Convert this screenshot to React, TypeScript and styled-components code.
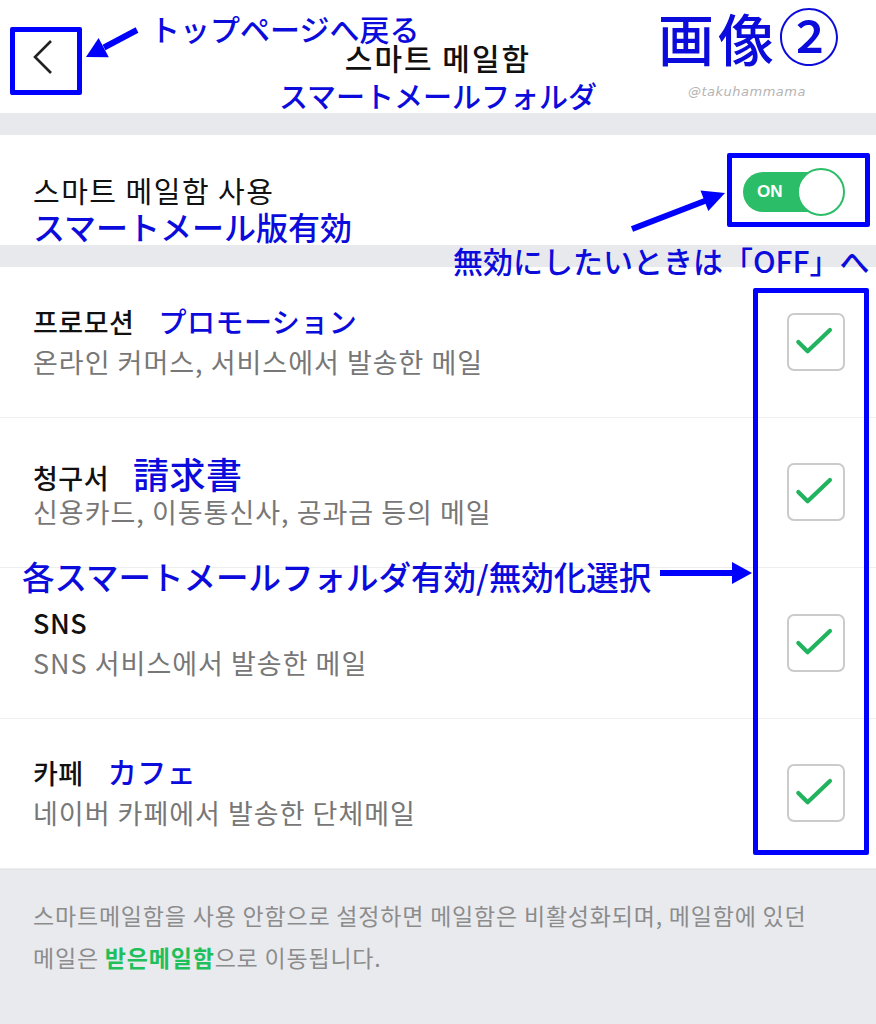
import React from "react";
import styled, { createGlobalStyle } from "styled-components";

const BLUE = "#0b0bdc";
const FRAME = "#0000ff";
const GREEN = "#2bbd67";

const GlobalStyle = createGlobalStyle`
  html, body {
    margin: 0;
    padding: 0;
    background: #ffffff;
  }
  body {
    font-family: "Noto Sans CJK KR", "Noto Sans", sans-serif;
    color: #111111;
  }
`;

const Page = styled.div`
  position: relative;
  width: 876px;
  min-height: 1024px;
  display: flex;
  flex-direction: column;
  overflow: hidden;
`;

const Header = styled.header`
  height: 113px;
  display: grid;
  grid-template-columns: 88px 1fr 88px;
  align-items: start;
`;

const BackButton = styled.button`
  margin: 29px 0 0 15px;
  width: 56px;
  height: 56px;
  padding: 0;
  border: 0;
  background: transparent;
  display: flex;
  align-items: center;
  justify-content: center;
`;

const TitleBlock = styled.div`
  display: flex;
  flex-direction: column;
  align-items: center;
  padding-top: 40px;
`;

const Title = styled.h1`
  margin: 0;
  font-size: 30px;
  line-height: 34px;
  font-weight: 500;
  letter-spacing: 2px;
  color: #111;
`;

const Note = styled.span<{ $size: number }>`
  font-family: "Noto Sans CJK JP", "Noto Sans", sans-serif;
  font-size: ${(p) => p.$size}px;
  line-height: ${(p) => Math.round(p.$size * 1.2)}px;
  font-weight: 500;
  color: ${BLUE};
  white-space: nowrap;
`;

const HeaderNote = styled(Note)`
  margin-top: 4px;
`;

const Band = styled.div`
  height: 22px;
  background: #e8e9ec;
`;

const SwitchSection = styled.section`
  height: 110px;
  display: flex;
  justify-content: space-between;
  padding: 0 31px 0 33px;
`;

const SwitchText = styled.div`
  display: flex;
  flex-direction: column;
  padding-top: 38px;
`;

const SwitchLabel = styled.div`
  font-size: 29px;
  line-height: 34px;
  letter-spacing: 1.5px;
  color: #111;
`;

const Switch = styled.div`
  position: relative;
  align-self: center;
  margin-top: 4px;
  width: 102px;
  height: 48px;
  display: flex;
  align-items: center;
`;

const Track = styled.div`
  width: 100px;
  height: 40px;
  border-radius: 20px;
  background: ${GREEN};
  display: flex;
  align-items: center;
  padding-left: 14px;
  box-sizing: border-box;
  color: #fff;
  font-family: "Liberation Sans", Arial, sans-serif;
  font-weight: 700;
  font-size: 17px;
`;

const Knob = styled.div`
  position: absolute;
  right: 0;
  top: 0;
  width: 48px;
  height: 48px;
  border-radius: 50%;
  background: #fff;
  border: 2.5px solid ${GREEN};
  box-sizing: border-box;
`;

const List = styled.div`
  display: flex;
  flex-direction: column;
`;

const Row = styled.div`
  height: 150.5px;
  display: flex;
  align-items: center;
  justify-content: space-between;
  padding: 0 31px 0 33px;
  border-bottom: 1px solid #eeeeee;
  box-sizing: border-box;
`;

const RowText = styled.div`
  display: flex;
  flex-direction: column;
`;

const RowTitle = styled.div`
  height: 40px;
  display: flex;
  align-items: baseline;
  gap: 24px;
  font-size: 27px;
  line-height: 40px;
  font-weight: 500;
  letter-spacing: 0.5px;
  color: #111;
`;

const RowSub = styled.div`
  font-size: 27px;
  line-height: 40px;
  letter-spacing: 1px;
  color: #777;
`;

const CheckBox = styled.div`
  width: 58px;
  height: 58px;
  border: 2px solid #cbcbcb;
  border-radius: 7px;
  box-sizing: border-box;
  display: flex;
  align-items: center;
  justify-content: center;
  background: #fff;
`;

const Footer = styled.footer`
  flex: 1;
  background: #e9eaee;
  border-top: 1px solid #e2e3e6;
  padding: 24px 33px 30px;
  font-size: 23px;
  line-height: 42px;
  color: #8c8c8c;
  letter-spacing: 0.8px;
`;

const FooterLine = styled.div`
  white-space: nowrap;
`;

const Link = styled.span`
  color: #1fbf5c;
  font-weight: 700;
`;

/* annotation overlays drawn on top of the screenshot */
const Overlay = styled.div<{ $x: number; $y: number }>`
  position: absolute;
  left: ${(p) => p.$x}px;
  top: ${(p) => p.$y}px;
  pointer-events: none;
`;

const Frame = styled.div<{ $x: number; $y: number; $w: number; $h: number }>`
  position: absolute;
  left: ${(p) => p.$x}px;
  top: ${(p) => p.$y}px;
  width: ${(p) => p.$w}px;
  height: ${(p) => p.$h}px;
  border: 5px solid ${FRAME};
  border-radius: 2px;
  box-sizing: border-box;
  pointer-events: none;
`;

const BigNote = styled.div`
  font-family: "Noto Sans CJK JP", sans-serif;
  font-size: 56px;
  line-height: 64px;
  font-weight: 500;
  color: ${BLUE};
  letter-spacing: 4px;
  white-space: nowrap;
`;

const Circled = styled.span`
  font-size: 62px;
`;

const Watermark = styled.div`
  font-family: "DejaVu Sans", sans-serif;
  font-style: italic;
  font-size: 13px;
  color: #b4b4b4;
  letter-spacing: 0.5px;
`;

const ArrowLayer = styled.svg`
  position: absolute;
  left: 0;
  top: 0;
  pointer-events: none;
`;

const Chevron = () => (
  <svg width="24" height="36" viewBox="0 0 24 36">
    <path d="M20 2 L4 18 L20 34" fill="none" stroke="#222" strokeWidth="2.6" strokeLinejoin="miter" />
  </svg>
);

const Check = () => (
  <svg width="58" height="58" viewBox="0 0 58 58">
    <path
      d="M10 29 L20 39 L44 16"
      fill="none"
      stroke="#22b35e"
      strokeWidth="4.5"
      strokeLinecap="round"
      strokeLinejoin="round"
    />
  </svg>
);

interface Folder {
  title: string;
  note?: string;
  noteSize?: number;
  sub: string;
}

const folders: Folder[] = [
  { title: "프로모션", note: "プロモーション", noteSize: 28, sub: "온라인 커머스, 서비스에서 발송한 메일" },
  { title: "청구서", note: "請求書", noteSize: 36, sub: "신용카드, 이동통신사, 공과금 등의 메일" },
  { title: "SNS", sub: "SNS 서비스에서 발송한 메일" },
  { title: "카페", note: "カフェ", noteSize: 29, sub: "네이버 카페에서 발송한 단체메일" },
];

export default function App() {
  return (
    <Page>
      <GlobalStyle />
      <Header>
        <BackButton aria-label="back">
          <Chevron />
        </BackButton>
        <TitleBlock>
          <Title>스마트 메일함</Title>
          <HeaderNote $size={29}>スマートメールフォルダ</HeaderNote>
        </TitleBlock>
        <div />
      </Header>

      <Band />

      <SwitchSection>
        <SwitchText>
          <SwitchLabel>스마트 메일함 사용</SwitchLabel>
          <Note $size={32}>スマートメール版有効</Note>
        </SwitchText>
        <Switch>
          <Track>ON</Track>
          <Knob />
        </Switch>
      </SwitchSection>

      <Band />

      <List>
        {folders.map((f) => (
          <Row key={f.title}>
            <RowText>
              <RowTitle>
                {f.title}
                {f.note && <Note $size={f.noteSize ?? 28}>{f.note}</Note>}
              </RowTitle>
              <RowSub>{f.sub}</RowSub>
            </RowText>
            <CheckBox>
              <Check />
            </CheckBox>
          </Row>
        ))}
      </List>

      <Footer>
        <FooterLine>스마트메일함을 사용 안함으로 설정하면 메일함은 비활성화되며, 메일함에 있던</FooterLine>
        <FooterLine>
          메일은 <Link>받은메일함</Link>으로 이동됩니다.
        </FooterLine>
      </Footer>

      {/* annotations */}
      <Frame $x={10} $y={27} $w={72} $h={68} />
      <Frame $x={727} $y={153} $w={143} $h={74} />
      <Frame $x={753} $y={288} $w={116} $h={567} />

      <Overlay $x={150} $y={10}>
        <Note $size={30}>トップページへ戻る</Note>
      </Overlay>
      <Overlay $x={658} $y={2}>
        <BigNote>
          画像<Circled>②</Circled>
        </BigNote>
      </Overlay>
      <Overlay $x={688} $y={84}>
        <Watermark>@takuhammama</Watermark>
      </Overlay>
      <Overlay $x={453} $y={242}>
        <Note $size={30}>無効にしたいときは「OFF」へ</Note>
      </Overlay>
      <Overlay $x={22} $y={556}>
        <Note $size={32.5}>各スマートメールフォルダ有効/無効化選択</Note>
      </Overlay>

      <ArrowLayer width="876" height="1024" viewBox="0 0 876 1024">
        <g fill={FRAME} stroke={FRAME} strokeWidth="6" strokeLinecap="butt">
          <line x1="137" y1="30" x2="104" y2="47.5" />
          <polygon points="86,57 108.8,57.3 98.6,37.9" stroke="none" />
          <line x1="632" y1="229" x2="706" y2="200.5" />
          <polygon points="725,193 708.3,211 700.5,190.4" stroke="none" />
          <line x1="660" y1="573" x2="734" y2="573" />
          <polygon points="752,573 732,562 732,584" stroke="none" />
        </g>
      </ArrowLayer>
    </Page>
  );
}
